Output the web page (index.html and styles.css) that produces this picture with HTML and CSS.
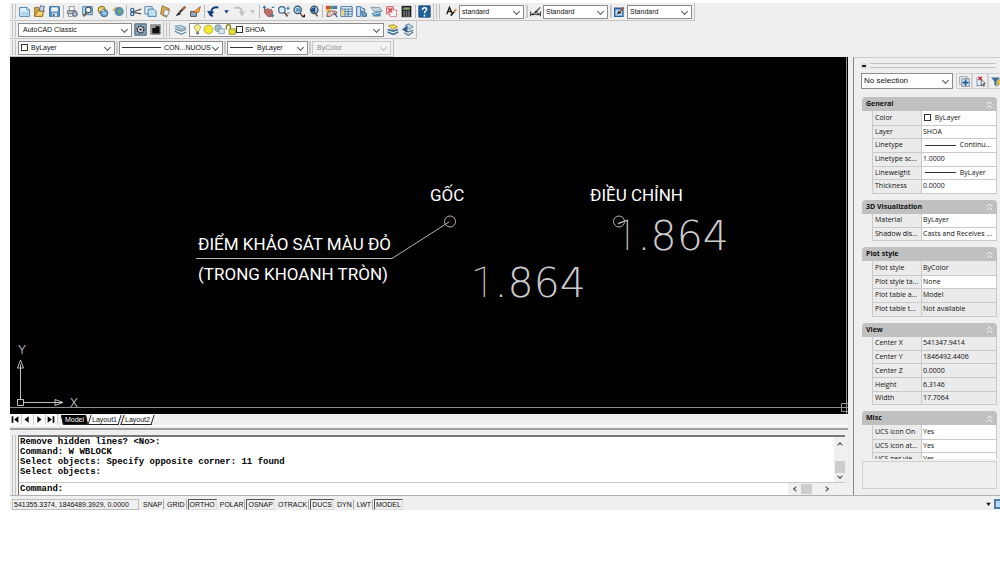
FILE: index.html
```html
<!DOCTYPE html>
<html lang="en">
<head>
<meta charset="utf-8">
<title>AutoCAD Classic</title>
<link rel="stylesheet" href="styles.css">
</head>
<body>
<div class="app">
  <header class="toolbars">
    <div class="row">
      <div class="bar standard">
        <i class="grip"></i>
        <button class="tool" aria-label="New"><svg viewBox="0 0 16 16"><path d="M2 3h9l3 3v8H2z" fill="#dff1fa" stroke="#356f9c"/><path d="M4 8h9v5H4z" fill="#a9d6ea"/><path d="M11 3v3h3" fill="#fff" stroke="#356f9c"/></svg></button>
        <button class="tool" aria-label="Open"><svg viewBox="0 0 16 16"><path d="M2 3h5l1 3h4v8H2z" fill="#d9a53c" stroke="#8a6420"/><path d="M2 14l4-7h8l-3 7z" fill="#f4cf6e" stroke="#8a6420"/><path d="M9 1l5 1-2 6-4-1z" fill="#cfe6f2" stroke="#447"/></svg></button>
        <button class="tool" aria-label="Save"><svg viewBox="0 0 16 16"><path d="M2 2h12v12H2z" fill="#5a93c9" stroke="#27598c"/><path d="M4 3h8v5H4z" fill="#eef5fb"/><path d="M5 10h6v4H5z" fill="#dce9f3"/><path d="M6 11h2v3H6z" fill="#27598c"/></svg></button>
        <i class="sep"></i>
        <button class="tool" aria-label="Plot"><svg viewBox="0 0 16 16"><path d="M4 2h6v5H4z" fill="#fff" stroke="#778"/><path d="M2 7h10v4H2z" fill="#b9c3cf" stroke="#5a6673"/><circle cx="11" cy="11" r="3" fill="#a9bfd2" stroke="#446"/><path d="M3 11h5v3H3z" fill="#fff" stroke="#778"/></svg></button>
        <button class="tool" aria-label="Plot preview"><svg viewBox="0 0 16 16"><path d="M2 2h12v10H2z" fill="#b7dcee" stroke="#356f9c"/><circle cx="9" cy="6" r="3.500" fill="#e8f5fb" stroke="#456" stroke-width="1.500"/><path d="M7 9l-4 5" stroke="#754f33" stroke-width="2"/></svg></button>
        <button class="tool" aria-label="Publish"><svg viewBox="0 0 16 16"><circle cx="7" cy="6" r="4.500" fill="#e9c54a" stroke="#735d1a"/><circle cx="10" cy="10" r="4.500" fill="#6ea6ce" stroke="#2b577b"/><path d="M4 5l6 2M8 10l5 1" stroke="#fff"/></svg></button>
        <button class="tool" aria-label="3D DWF"><svg viewBox="0 0 16 16"><path d="M1 6l5-4 6 2-5 5z" fill="#e4c263"/><circle cx="10" cy="8" r="5" fill="#5791bd" stroke="#4f7f9e"/><path d="M8 6l4-1 1 4-3 3z" fill="#73b069"/></svg></button>
        <i class="sep"></i>
        <button class="tool" aria-label="Cut"><svg viewBox="0 0 16 16"><path d="M6 8l9-3M6 9l9 2" stroke="#555" stroke-width="1.500"/><circle cx="4" cy="6" r="2" fill="none" stroke="#31618e" stroke-width="1.500"/><circle cx="4" cy="11" r="2" fill="none" stroke="#31618e" stroke-width="1.500"/></svg></button>
        <button class="tool" aria-label="Copy"><svg viewBox="0 0 16 16"><path d="M1 2h9v9H1z" fill="#e3f2fa" stroke="#356f9c"/><path d="M5 5h7l3 3v6H5z" fill="#bfe0ef" stroke="#356f9c"/></svg></button>
        <button class="tool" aria-label="Paste"><svg viewBox="0 0 16 16"><path d="M4 1l9 4-4 10-7-4z" fill="#e3b04a" stroke="#866022"/><path d="M8 5l5 3-3 6-5-3z" fill="#f3f8fb" stroke="#678"/></svg></button>
        <button class="tool" aria-label="Match properties"><svg viewBox="0 0 16 16"><path d="M3 13l3-4 2 2z" fill="#222" stroke="#222"/><path d="M7 9l4-4" stroke="#333" stroke-width="2.500"/><path d="M10 6l4-4" stroke="#a0663a" stroke-width="3"/></svg></button>
        <button class="tool" aria-label="Block editor"><svg viewBox="0 0 16 16"><path d="M2 8h7v6H2z" fill="#8fb3d0" stroke="#333"/><path d="M5 9l9-7-2 7z" fill="#f3b42f" stroke="#b3541f"/></svg></button>
        <i class="sep"></i>
        <button class="tool" aria-label="Undo"><svg viewBox="0 0 16 16"><path d="M5 9c0-5 4-7 9-6M4 9c0 3 1 4 3 5" fill="none" stroke="#173f7e" stroke-width="2.500"/><path d="M0 7l9 1-5 6z" fill="#173f7e"/></svg></button>
        <button class="more" aria-label="Undo list"></button>
        <button class="tool" aria-label="Redo"><svg viewBox="0 0 16 16"><path d="M2 4c5-2 9 0 9 5" fill="none" stroke="#c3c3c3" stroke-width="2.500"/><path d="M7 8h8l-4 6z" fill="#c3c3c3"/></svg></button>
        <button class="more off" aria-label="Redo list"></button>
        <i class="sep"></i>
        <button class="tool" aria-label="Pan"><svg viewBox="0 0 16 16"><path d="M3 4l3 2 1-2 2 2 2-1 2 3-1 6H7L3 9z" fill="#bd6f68" stroke="#8e4c48"/><path d="M1 3h4M3 1v4M11 13h4M13 11v4M12 3h3" stroke="#397ba4" stroke-width="1.500"/></svg></button>
        <button class="tool" aria-label="Zoom realtime"><svg viewBox="0 0 16 16"><circle cx="6" cy="6" r="4" fill="#d9edf8" stroke="#416782" stroke-width="1.500"/><path d="M9 9l4 5" stroke="#754f33" stroke-width="2"/><path d="M11 4h5M13.500 1.500v5M12 10h4" stroke="#246ba5"/></svg></button>
        <button class="tool" aria-label="Zoom window"><svg viewBox="0 0 16 16"><circle cx="7" cy="6" r="4.500" fill="#b8d8ed" stroke="#35556c" stroke-width="1.500"/><path d="M5 4h5v4H5z" fill="#5f94bd"/><path d="M10 10l3 4" stroke="#754f33" stroke-width="2"/><path d="M12 15h4v-4z" fill="#111"/></svg></button>
        <button class="tool" aria-label="Zoom previous"><svg viewBox="0 0 16 16"><circle cx="9" cy="6" r="4.500" fill="#a7cbe3" stroke="#35556c" stroke-width="1.500"/><path d="M3 6l7-4v8z" fill="#244d82"/><path d="M10 10l3 4" stroke="#754f33" stroke-width="2"/></svg></button>
        <i class="sep"></i>
        <button class="tool" aria-label="Properties"><svg viewBox="0 0 16 16"><path d="M1 1h5v4H1z" fill="#d4433d"/><path d="M6 1h4v4H6z" fill="#55a04b"/><path d="M10 1h5v4h-5z" fill="#4a70c0"/><path d="M1 5h5v3H1z" fill="#e8bf33"/><path d="M2 14l2-6 4-1 6 1v3l-5 1-2 2z" fill="#e7c8b7" stroke="#7b4747"/><path d="M11 9l4 6" stroke="#345d94" stroke-width="1.500"/></svg></button>
        <button class="tool" aria-label="DesignCenter"><svg viewBox="0 0 16 16"><path d="M1 2h14v12H1z" fill="#e7f2f9" stroke="#2e628d"/><path d="M1 5h14M6 5v9M10 5v9M6 8h9M6 11h9" stroke="#2e628d"/><path d="M2 6h3v7H2z" fill="#efd375"/></svg></button>
        <button class="tool" aria-label="Tool palettes"><svg viewBox="0 0 16 16"><path d="M2 2h5v12H2z" fill="#cde0ed" stroke="#245b91"/><path d="M8 3l4 2v3M8 7l6 3v4H9z" fill="#73a2ca" stroke="#245b91"/></svg></button>
        <button class="tool" aria-label="Sheet set"><svg viewBox="0 0 16 16"><path d="M1 3h11l3 5H5z" fill="#c3d2d9" stroke="#7a94a3"/><path d="M2 10l11-3v7H4z" fill="#4f8cb3"/><path d="M4 12l8-3" stroke="#fff"/></svg></button>
        <button class="tool" aria-label="Markup"><svg viewBox="0 0 16 16"><path d="M2 2h8v9H2z" fill="#fbd9d9" stroke="#d33d42"/><path d="M6 6h8v8H6z" fill="#fff" stroke="#d33d42" stroke-dasharray="3 1"/><path d="M4 4l5 5M9 4L4 9" stroke="#d33d42" stroke-width="1.500"/></svg></button>
        <button class="tool" aria-label="QuickCalc"><svg viewBox="0 0 16 16"><path d="M2 1h12v14H2z" fill="#222"/><path d="M4 3h8v3H4z" fill="#7ca66e"/><path d="M4 8.500h8M4 11h8M4 13.500h8" stroke="#ddd" stroke-dasharray="2 1"/></svg></button>
        <i class="sep"></i>
        <button class="tool" aria-label="Help"><svg viewBox="0 0 16 16"><path d="M1 1h14v14H1z" fill="#1f5f9c" stroke="#174572"/><path d="M5.500 6c0-4 6-3 5 0-.5 1.500-2.500 1.500-2.500 4M8 12v2" fill="none" stroke="#fff" stroke-width="1.800"/></svg></button>
      </div>
      <div class="bar styles">
        <i class="grip"></i>
        <button class="tool" aria-label="Text style"><svg viewBox="0 0 16 16"><path d="M1 12L5 2l4 9M3 8h5" fill="none" stroke="#222" stroke-width="2"/><path d="M7 14l5-6" stroke="#222" stroke-width="2.500"/><path d="M11 9l4-4" stroke="#c97a38" stroke-width="2.500"/></svg></button>
        <span class="pick w-style"><select aria-label="Text style name"><option>standard</option></select></span>
        <i class="split"></i>
        <button class="tool" aria-label="Dimension style"><svg viewBox="0 0 16 16"><path d="M1 8v7M15 8v7M2 12h12" stroke="#222" stroke-width="1.500"/><path d="M2 12l3-2v4zM14 12l-3-2v4zM5 11l4-5 3 3z" fill="#222"/><path d="M9 8l6-6" stroke="#555" stroke-width="2"/></svg></button>
        <span class="pick w-style"><select aria-label="Dimension style name"><option>Standard</option></select></span>
        <i class="split"></i>
        <button class="tool" aria-label="Table style"><svg viewBox="0 0 16 16"><path d="M1 3h12v12H1z" fill="#b8d6f0" stroke="#2a5fa5" stroke-width="2"/><path d="M1 4h12" stroke="#2a5fa5" stroke-width="2"/><path d="M4 12l3-5 4 3z" fill="#222"/><path d="M9 8l5-6" stroke="#a65e2d" stroke-width="2.500"/></svg></button>
        <span class="pick w-style"><select aria-label="Table style name"><option>Standard</option></select></span>
      </div>
    </div>
    <div class="row">
      <div class="bar workspace">
        <i class="grip"></i>
        <span class="pick w-space"><select aria-label="Workspace"><option>AutoCAD Classic</option></select></span>
        <button class="tool" aria-label="Workspace settings"><svg viewBox="0 0 16 16"><path d="M1 1h14v14H1z" fill="#87a5bd" stroke="#35495a"/><circle cx="8" cy="8" r="4" fill="#e7eef3" stroke="#222" stroke-width="2" stroke-dasharray="2 1"/><circle cx="8" cy="8" r="1.500" fill="#333"/></svg></button>
        <button class="tool" aria-label="My workspace"><svg viewBox="0 0 16 16"><path d="M2 2h12v12H2z" fill="#999" stroke="#666" stroke-dasharray="2 1"/><path d="M4 6h4V4h5v9H4z" fill="#111"/></svg></button>
      </div>
      <div class="bar layers">
        <i class="grip"></i>
        <button class="tool" aria-label="Layer manager"><svg viewBox="0 0 16 16"><path d="M1 4l7-1 7 3-6 2z" fill="#b5d1e3" stroke="#668da8"/><path d="M1 7l8 3 6-2M1 10l8 4 6-3" fill="none" stroke="#668da8" stroke-width="1.500"/></svg></button>
        <span class="pick w-layer"><select aria-label="Layer"><option>SHOA</option></select>
          <span class="glyphs">
            <svg viewBox="0 0 16 16"><path d="M8 1c-6 0-5 6-2 8v2h4V9c3-2 4-8-2-8z" fill="#f8ed83" stroke="#8a8443"/><path d="M6 12h4v3H6z" fill="#667"/></svg>
            <svg viewBox="0 0 16 16"><circle cx="8" cy="8" r="6.500" fill="#f5e62e" stroke="#9b9440"/></svg>
            <svg viewBox="0 0 16 16"><circle cx="6" cy="6" r="5" fill="#a5bfcd" stroke="#658394"/><path d="M7 7h8v7H7z" fill="#dceaf1" stroke="#658394"/></svg>
            <svg viewBox="0 0 16 16"><path d="M2 8V4c0-4 6-4 6 0v4" fill="none" stroke="#85821e" stroke-width="2"/><path d="M6 7h9v8H6z" fill="#e7df32" stroke="#77731d"/></svg>
            <i class="swatch"></i>
          </span>
        </span>
        <button class="tool" aria-label="Make object's layer current"><svg viewBox="0 0 16 16"><path d="M3 3l7-1 4 3-6 3z" fill="#f1d65b" stroke="#a28a27"/><path d="M2 8l7 2 6-2M2 11l7 3 6-3" fill="none" stroke="#3d6f9a" stroke-width="2"/></svg></button>
        <button class="tool" aria-label="Layer previous"><svg viewBox="0 0 16 16"><path d="M5 3l5-2 5 4-5 3z" fill="#b5d1e3" stroke="#527a98"/><path d="M4 9l5 2 6-2M4 12l5 3 6-4" fill="none" stroke="#527a98" stroke-width="1.500"/><path d="M1 8l7-5v9z" fill="#345f86"/></svg></button>
      </div>
    </div>
    <div class="row">
      <div class="bar properties">
        <i class="grip"></i>
        <span class="pick w-color"><select aria-label="Color"><option>ByLayer</option></select><span class="glyphs"><i class="swatch"></i></span></span>
        <i class="split"></i>
        <span class="pick w-type"><select aria-label="Linetype"><option>CON...NUOUS</option></select><span class="glyphs"><i class="stroke"></i></span></span>
        <i class="split"></i>
        <span class="pick w-weight"><select aria-label="Lineweight"><option>ByLayer</option></select><span class="glyphs"><i class="stroke short"></i></span></span>
        <i class="split"></i>
        <span class="pick w-plot off"><select aria-label="Plot style" disabled><option>ByColor</option></select></span>
      </div>
    </div>
  </header>

  <div class="work">
    <main class="main">
      <svg class="drawing" viewBox="0 0 838 357" role="img" aria-label="Model space drawing">
        <g class="cad-text">
          <text x="420" y="144">GỐC</text>
          <text x="580" y="144">ĐIỀU CHỈNH</text>
          <text x="188" y="193">ĐIỂM KHẢO SÁT MÀU ĐỎ</text>
          <text x="188" y="223">(TRONG KHOANH TRÒN)</text>
        </g>
        <g class="cad-digits">
          <text x="461" y="240"><tspan class="one">1</tspan>.864</text>
          <text x="604" y="193"><tspan class="one">1</tspan>.864</text>
        </g>
        <g class="cad-line">
          <path d="M186 201.500H382L439 165"/>
          <circle cx="440" cy="164.500" r="5.500"/>
          <circle cx="609" cy="164.500" r="5.500"/>
        </g>
        <path class="node" d="M440 164h1M609 164h1"/>
        <g class="axes">
          <path d="M7.500 342.500h6v6h-6zM10.500 342.500v-35M14 345.500h39M10.500 303l-3 8h6zM53 345.500l-8-3v6z"/>
          <text x="8" y="297">Y</text>
          <text x="60" y="350">X</text>
        </g>
        <path class="cross" d="M0 350.500H838M836.500 0V357M831.500 346.500h8v8h-8z"/>
      </svg>

      <nav class="tabs">
        <button class="step" aria-label="First tab"><svg viewBox="0 0 12 10"><path d="M2 1h2v8H2zM10 1v8L5 5z"/></svg></button>
        <button class="step" aria-label="Previous tab"><svg viewBox="0 0 12 10"><path d="M8 1v8L3 5z"/></svg></button>
        <button class="step" aria-label="Next tab"><svg viewBox="0 0 12 10"><path d="M4 1v8l5-4z"/></svg></button>
        <button class="step" aria-label="Last tab"><svg viewBox="0 0 12 10"><path d="M2 1v8l5-4zM8 1h2v8H8z"/></svg></button>
        <a class="tab on" href="#model">Model</a>
        <a class="tab" href="#layout1">Layout1</a>
        <a class="tab" href="#layout2">Layout2</a>
      </nav>

      <section class="command">
        <i class="grip"></i>
        <div class="console">
          <div class="history">
            <pre>Remove hidden lines? &lt;No&gt;:
Command: W WBLOCK
Select objects: Specify opposite corner: 11 found
Select objects:</pre>
            <div class="vbar"><i class="chev up"></i><i class="thumb"></i><i class="chev down"></i></div>
          </div>
          <div class="prompt">
            <label for="cmd">Command:</label><input id="cmd" type="text">
            <div class="hbar"><i class="chev left"></i><i class="thumb"></i><i class="chev right"></i></div>
          </div>
        </div>
      </section>
    </main>

    <aside class="palette">
      <div class="palette-top"><button class="fold" aria-label="Collapse"></button><i class="rails"></i></div>
      <div class="palette-pick">
        <span class="pick w-sel"><select aria-label="Selection"><option>No selection</option></select></span>
        <button class="square" aria-label="Toggle PICKADD"><svg viewBox="0 0 16 16"><path d="M1 1h11v11H1z" fill="#fff" stroke="#777"/><path d="M4 4h11v11H4z" fill="#d5e6f3" stroke="#666"/><path d="M9.500 5v9M5 9.500h9" stroke="#235b9b" stroke-width="2.500"/></svg></button>
        <button class="square" aria-label="Select objects"><svg viewBox="0 0 16 16"><path d="M2 14h12M3 2v12" stroke="#3b6c9f"/><path d="M5 1l5 5M10 1L5 6" stroke="#d22630" stroke-width="2"/><path d="M9 5v9l2-2 2 3 1-1-2-3h3z" fill="#fff" stroke="#222"/></svg></button>
        <button class="square" aria-label="Quick select"><svg viewBox="0 0 16 16"><path d="M0 2h13L8 8v7l-3-2V8z" fill="#376da0"/><path d="M13 4l-5 6h3l-2 5 7-8h-3l2-3z" fill="#f5d52e" stroke="#a88a18"/></svg></button>
      </div>
      <div class="groups">
        <section class="group">
          <h2>General<svg viewBox="0 0 10 10"><path d="M2 5l3-3 3 3M2 9l3-3 3 3"/></svg></h2>
          <table>
            <tr><th>Color</th><td><i class="swatch"></i> ByLayer</td></tr>
            <tr><th>Layer</th><td>SHOA</td></tr>
            <tr><th>Linetype</th><td><i class="stroke"></i> Continu...</td></tr>
            <tr><th>Linetype sc...</th><td>1.0000</td></tr>
            <tr><th>Lineweight</th><td><i class="stroke"></i> ByLayer</td></tr>
            <tr><th>Thickness</th><td>0.0000</td></tr>
          </table>
        </section>
        <section class="group">
          <h2>3D Visualization<svg viewBox="0 0 10 10"><path d="M2 5l3-3 3 3M2 9l3-3 3 3"/></svg></h2>
          <table>
            <tr><th>Material</th><td>ByLayer</td></tr>
            <tr><th>Shadow dis...</th><td>Casts and Receives ...</td></tr>
          </table>
        </section>
        <section class="group">
          <h2>Plot style<svg viewBox="0 0 10 10"><path d="M2 5l3-3 3 3M2 9l3-3 3 3"/></svg></h2>
          <table>
            <tr class="fixed"><th>Plot style</th><td>ByColor</td></tr>
            <tr><th>Plot style ta...</th><td>None</td></tr>
            <tr class="fixed"><th>Plot table a...</th><td>Model</td></tr>
            <tr class="fixed"><th>Plot table t...</th><td>Not available</td></tr>
          </table>
        </section>
        <section class="group">
          <h2>View<svg viewBox="0 0 10 10"><path d="M2 5l3-3 3 3M2 9l3-3 3 3"/></svg></h2>
          <table>
            <tr class="fixed"><th>Center X</th><td>541347.9414</td></tr>
            <tr class="fixed"><th>Center Y</th><td>1846492.4406</td></tr>
            <tr class="fixed"><th>Center Z</th><td>0.0000</td></tr>
            <tr class="fixed"><th>Height</th><td>6.3146</td></tr>
            <tr class="fixed"><th>Width</th><td>17.7064</td></tr>
          </table>
        </section>
        <section class="group">
          <h2>Misc<svg viewBox="0 0 10 10"><path d="M2 5l3-3 3 3M2 9l3-3 3 3"/></svg></h2>
          <table>
            <tr><th>UCS icon On</th><td>Yes</td></tr>
            <tr><th>UCS icon at...</th><td>Yes</td></tr>
            <tr><th>UCS per vie...</th><td>Yes</td></tr>
          </table>
        </section>
      </div>
      <div class="hint"></div>
    </aside>
  </div>

  <footer class="status">
    <output class="coords">541355.3374, 1846489.3929, 0.0000</output>
    <button class="mode">SNAP</button>
    <button class="mode">GRID</button>
    <button class="mode on">ORTHO</button>
    <button class="mode">POLAR</button>
    <button class="mode on">OSNAP</button>
    <button class="mode">OTRACK</button>
    <button class="mode on">DUCS</button>
    <button class="mode">DYN</button>
    <button class="mode">LWT</button>
    <button class="mode on">MODEL</button>
    <button class="more end" aria-label="Status bar menu"></button>
    <button class="clean" aria-label="Clean screen"></button>
  </footer>
</div>
</body>
</html>
```
FILE: styles.css
```css
* { box-sizing: border-box; }

body {
  margin: 0;
  background: #fff;
  color: #111;
  font: 7px/10px "Liberation Sans", sans-serif;
}

button, select, input {
  margin: 0;
  padding: 0;
  border: 0;
  border-radius: 0;
  background: none;
  color: inherit;
  font: inherit;
}

svg { display: block; }

.app {
  margin: 3px 0 0 10px;
  background: #efefef;
  overflow: hidden;
}

/* Toolbars */
.row { display: flex; height: 18px; }

.bar {
  display: flex;
  align-items: center;
  gap: 2px;
  padding: 0 2px;
  border-right: 1px solid #c4c4c4;
  border-bottom: 1px solid #c4c4c4;
}

.grip {
  flex: none;
  width: 4px;
  height: 15px;
  border: solid #c0c0c0;
  border-width: 0 1px;
}

.sep { flex: none; width: 1px; height: 13px; background: #b8b8b8; }
.split { flex: none; width: 2px; height: 13px; background: #c8c8c8; }

.tool { flex: none; width: 13px; height: 13px; }
.tool svg { width: 100%; height: 13px; }

.more {
  flex: none;
  width: 9px;
  height: 4px;
  background: #173f7e;
  clip-path: polygon(25% 20%, 75% 20%, 50% 100%);
}
.more.off { background: #bbb; }

.workspace { width: 154px; }
.layers .grip { margin-right: 2px; }
.properties { gap: 1px; }
.properties .grip { margin-right: 1px; }
.styles .grip { margin-right: 4px; }
.styles .tool { width: 11px; }

.pick {
  position: relative;
  flex: none;
  display: flex;
  height: 14px;
  border: 1px solid #8c8c8c;
  background: #fff;
}
.pick select {
  width: 100%;
  padding-left: 4px;
  appearance: none;
  opacity: 1;
}
.pick::after {
  content: "";
  position: absolute;
  right: 4px;
  top: 3px;
  width: 4px;
  height: 4px;
  border: solid #555;
  border-width: 0 1px 1px 0;
  transform: rotate(45deg);
  pointer-events: none;
}
.pick.off { border-color: #c8c8c8; background: #f2f2f2; }
.pick.off select { color: #8c8c8c; }
.pick.off::after { border-color: #bbb; }

.w-style { width: 65px; }
.w-style select { padding-left: 2px; }
.w-space { width: 114px; }
.w-layer { width: 195px; }
.w-layer select { padding-left: 55px; }
.w-color { width: 97px; }
.w-color select { padding-left: 12px; }
.w-type { width: 104px; }
.w-type select { padding-left: 44px; }
.w-weight { width: 81px; }
.w-weight select { padding-left: 29px; }
.w-plot { width: 79px; }
.w-sel { width: 92px; height: 16px; }
.w-sel select { padding-left: 2px; font-size: 8px; }
.w-sel::after { top: 4px; }

.glyphs {
  position: absolute;
  left: 2px;
  top: 0;
  height: 12px;
  display: flex;
  align-items: center;
  pointer-events: none;
}
.glyphs svg { width: 11px; height: 11px; }

.swatch {
  display: inline-block;
  width: 7px;
  height: 7px;
  border: 1px solid #333;
  background: #fff;
}
.stroke {
  display: inline-block;
  width: 39px;
  height: 1px;
  background: #333;
  vertical-align: middle;
}
.stroke.short { width: 23px; }

/* Drawing and command area */
.work { display: flex; border-bottom: 1px solid #b0b0b0; }
.main { flex: 1; min-width: 0; display: flex; flex-direction: column; }

.drawing { width: 100%; height: auto; background: #000; }
.cad-text { fill: #fff; font: 17px Roboto, sans-serif; }
.cad-digits { fill: #ccc; font: 200 41px "DejaVu Sans", "DejaVu Sans Light", sans-serif; }
.cad-digits .one { font: 100 43px Roboto, sans-serif; }
.cad-line { fill: none; stroke: #b4b4b4; }
.node { stroke: #a00; }
.axes { fill: none; stroke: #c0c0c0; }
.axes text { fill: #d0d0d0; stroke: none; font: 300 12px Inter, sans-serif; }
.cross { fill: none; stroke: #909090; }

.tabs {
  display: flex;
  align-items: center;
  height: 12px;
  border-bottom: 1px solid #fff;
}
.step { width: 12px; height: 11px; background: #fafafa; border-right: 1px solid #ccc; }
.step svg { width: 10px; height: 9px; }
.tab {
  position: relative;
  z-index: 0;
  padding: 0 3px;
  margin-left: 2px;
  color: #111;
  text-decoration: none;
}
.tab::before {
  content: "";
  position: absolute;
  inset: 0;
  z-index: -1;
  background: #fff;
  border: solid #222;
  border-width: 0 1px 1px;
  transform: skewX(-18deg);
}
.tab.on { color: #fff; margin-left: 4px; }
.tab.on::before { background: #000; transform: skewX(12deg); }

.command {
  display: flex;
  gap: 2px;
  margin-top: 2px;
  padding: 5px 3px 0 2px;
  border-top: 2px solid #a0a0a0;
}
.command .grip { height: auto; }
.console {
  flex: 1;
  min-width: 0;
  border: solid #777;
  border-width: 2px 0 0 1px;
  background: #fff;
  color: #000;
  font: bold 9px/10px "Liberation Mono", monospace;
}
.history { display: flex; justify-content: space-between; height: 46px; border-bottom: 1px solid #c8c8c8; }
.history pre { margin: 0; padding-left: 1px; font: inherit; }
.vbar {
  display: flex;
  flex-direction: column;
  align-items: center;
  justify-content: space-between;
  width: 11px;
  padding: 6px 0 4px;
  background: #f0f0f0;
}
.vbar .thumb { width: 10px; height: 12px; margin-top: 12px; }
.thumb { background: #cdcdcd; }
.prompt { display: flex; align-items: center; height: 12px; padding-left: 1px; }
.prompt input { flex: 1; min-width: 0; outline: 0; }
.hbar {
  display: flex;
  align-items: center;
  justify-content: space-between;
  width: 57px;
  height: 12px;
  padding: 0 17px 0 6px;
  background: #f0f0f0;
}
.hbar .thumb { width: 11px; height: 10px; margin-right: 10px; }
.chev { width: 4px; height: 4px; border: solid #444; border-width: 1px 0 0 1px; }
.up { transform: rotate(45deg); }
.down { transform: rotate(225deg); }
.left { transform: rotate(-45deg); }
.right { transform: rotate(135deg); }

/* Properties palette */
.palette {
  display: flex;
  flex-direction: column;
  width: 147px;
  flex: none;
  margin-left: 5px;
  padding: 4px 0 6px 7px;
  border-left: 1px solid #888;
  border-top: 1px solid #ccc;
}
.palette-top { display: flex; align-items: center; gap: 3px; height: 7px; }
.fold {
  width: 6px;
  height: 6px;
  background: linear-gradient(#222, #222) center / 4px 2px no-repeat #ddd;
}
.rails {
  flex: 1;
  height: 5px;
  margin-right: 4px;
  border: solid #c0c0c0;
  border-width: 1px 0;
}
.palette-pick { display: flex; align-items: center; margin: 4px 0 8px; }
.square {
  flex: none;
  width: 16px;
  height: 16px;
  padding: 2px;
  border: 1px solid #d0d0d0;
}
.w-sel + .square { margin-left: 3px; }
.square svg { width: 11px; height: 11px; }

.groups { flex: 1; contain: size; overflow: hidden; margin-right: 3px; padding-left: 1px; }
.group { margin-bottom: 6px; }
.group h2 {
  display: flex;
  align-items: center;
  justify-content: space-between;
  height: 14px;
  margin: 0;
  padding: 0 3px 0 4px;
  border-radius: 4px 4px 0 0;
  background: #c0c0c0;
  color: #111;
  font: bold 7px/12px "Open Sans", sans-serif;
}
.group h2 svg { width: 9px; height: 9px; fill: none; stroke: #fff; }
.group table {
  width: calc(100% - 10px);
  margin-left: 10px;
  border-collapse: collapse;
  table-layout: fixed;
}
.group tr { height: 14px; }
.group tr:nth-child(3n+2) { height: 13px; }
.group th, .group td {
  padding: 0 0 0 2px;
  border: 1px solid #cacaca;
  border-top: 0;
  background: #ebebeb;
  font: 7px/12px "Open Sans", sans-serif;
  text-align: left;
  white-space: nowrap;
}
.group th { width: 49px; }
.group td { padding-left: 1px; background: #fff; }
.group .fixed td { background: #ebebeb; }
.group td .swatch { margin: 0 2px -1px 1px; }
.group td .stroke { width: 31px; margin: 0 2px 0 2px; }
.hint { height: 28px; margin: 2px 3px 0 1px; border: 1px solid #cfcfcf; }

/* Status bar */
.status { display: flex; align-items: center; gap: 1px; height: 14px; padding: 2px 0 0 2px; }
.coords {
  width: 127px;
  height: 11px;
  margin-right: 1px;
  padding-left: 1px;
  border: 1px solid #c0c0c0;
  line-height: 9px;
}
.mode {
  height: 11px;
  padding: 0 1px;
  border: 1px solid #efefef;
  border-right-color: #aaa;
}
.mode.on { border-color: #555 #ddd #ddd #555; }
.more.end { margin-left: auto; background: #111; }
.clean { width: 6px; height: 10px; border: 2px solid #4d7da8; border-right: 0; background: #b8d6ec; }
```
